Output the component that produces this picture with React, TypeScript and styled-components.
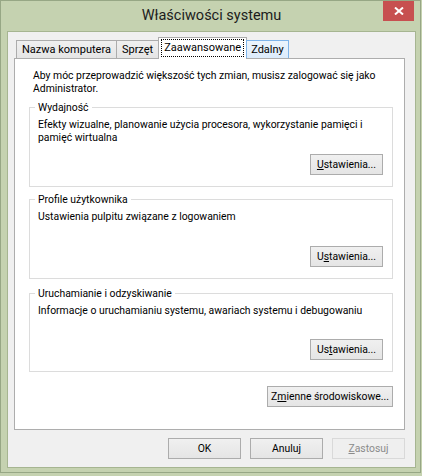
import * as React from 'react';
import styled, { createGlobalStyle } from 'styled-components';

const GlobalStyle = createGlobalStyle`
  html, body {
    margin: 0;
    padding: 0;
  }
  body {
    width: 422px;
    height: 476px;
    overflow: hidden;
    background: #c5d2b0;
    font-family: Roboto, 'Liberation Sans', Arial, sans-serif;
    font-size: 10.4px;
    color: #000;
  }
`;

const Window = styled.div`
  box-sizing: border-box;
  width: 421px;
  height: 473px;
  border: 1px solid #97a785;
  background: #c5d2b0;
  display: flex;
  flex-direction: column;
  padding: 0 4px 4px 6px;
`;

const TitleBar = styled.div`
  height: 30px;
  display: grid;
  grid-template-columns: 1fr auto 1fr;
  align-items: start;
`;

const Title = styled.div`
  grid-column: 2;
  font-size: 14.5px;
  line-height: 29px;
  color: #1c1c1c;
  white-space: nowrap;
`;

const CloseButton = styled.div`
  grid-column: 3;
  justify-self: end;
  margin-right: 2px;
  width: 31px;
  height: 20px;
  background: #c75050;
  display: flex;
  align-items: center;
  justify-content: center;
`;

const Client = styled.div`
  flex: 1;
  display: flex;
  flex-direction: column;
  background: #f0f0f0;
  border: 1px solid #a6b591;
  padding: 5px 10px 0 6px;
`;

const TabRow = styled.div`
  display: flex;
  align-items: flex-end;
  padding-left: 2px;
  margin-bottom: -1px;
  position: relative;
  z-index: 1;
`;

const Tab = styled.div<{ $active?: boolean; $hover?: boolean }>`
  box-sizing: border-box;
  height: ${(p) => (p.$active ? '22px' : '18px')};
  margin-bottom: ${(p) => (p.$active ? '0' : '1px')};
  padding: 0 ${(p) => (p.$active ? '3px' : p.$hover ? '4px' : '5px')};
  display: flex;
  align-items: center;
  font-size: 11px;
  border: 1px solid ${(p) => (p.$hover ? '#7eb4ea' : '#acacac')};
  border-bottom: none;
  margin-left: -1px;
  background: ${(p) =>
    p.$active
      ? '#fff'
      : p.$hover
        ? 'linear-gradient(#ecf4fc, #dcecfc)'
        : 'linear-gradient(#f0f0f0, #e5e5e5)'};
  white-space: nowrap;

  &:first-child {
    margin-left: 0;
  }
`;

const FocusLabel = styled.span`
  outline: 1px dotted #000;
  outline-offset: 0;
  padding: 1px 2px 2px;
  margin-top: -2px;
`;

const Panel = styled.div`
  box-sizing: border-box;
  height: 372px;
  background: #fff;
  border: 1px solid #adadad;
  padding: 10px 11px 0 14px;
  display: flex;
  flex-direction: column;
`;

const Intro = styled.p`
  margin: 0 0 0 4px;
  line-height: 13px;
`;

const Group = styled.fieldset<{ $top: number }>`
  box-sizing: border-box;
  margin: ${(p) => p.$top}px 0 0;
  border: 1px solid #dcdcdc;
  padding: 4px 9px 11px 8px;
  min-inline-size: 0;
`;

const Legend = styled.legend`
  padding: 0 3px;
  margin-left: -3px;
  line-height: 13px;
`;

const GroupBody = styled.div<{ $height: number }>`
  height: ${(p) => p.$height}px;
  display: flex;
  flex-direction: column;
  justify-content: space-between;
`;

const GroupText = styled.p`
  margin: 0;
  line-height: 13px;
`;

const Button = styled.button<{ $width?: number }>`
  box-sizing: border-box;
  width: ${(p) => p.$width ?? 73}px;
  height: 21px;
  padding: 0;
  border: 1px solid #acacac;
  background: linear-gradient(#f0f0f0, #e5e5e5);
  font-family: inherit;
  font-size: 10.4px;
  color: #000;
  white-space: nowrap;

  &:disabled {
    border-color: #d9d9d9;
    background: #efefef;
    color: #8b8b8b;
  }
`;

const GroupButton = styled(Button)`
  align-self: flex-end;
`;

const EnvButton = styled(Button)`
  margin-top: 14px;
  align-self: flex-end;
`;

const Footer = styled.div`
  display: flex;
  justify-content: flex-end;
  gap: 9px;
  margin-top: 8px;
`;

const groups = [
  {
    title: 'Wydajność',
    text: 'Efekty wizualne, planowanie użycia procesora, wykorzystanie pamięci i pamięć wirtualna',
    key: 0,
    top: 6,
    body: 57,
  },
  {
    title: 'Profile użytkownika',
    text: 'Ustawienia pulpitu związane z logowaniem',
    key: 1,
    top: 6,
    body: 57,
  },
  {
    title: 'Uruchamianie i odzyskiwanie',
    text: 'Informacje o uruchamianiu systemu, awariach systemu i debugowaniu',
    key: 2,
    top: 8,
    body: 56,
  },
];

// Access key underline sits on a different letter for each button
const settingsLabel = (k: number) => {
  const word = 'Ustawienia...';
  return (
    <>
      {word.slice(0, k)}
      <u>{word[k]}</u>
      {word.slice(k + 1)}
    </>
  );
};

export default function App() {
  return (
    <>
      <GlobalStyle />
      <Window>
        <TitleBar>
          <Title>Właściwości systemu</Title>
          <CloseButton>
            <svg width="10" height="8" viewBox="0 0 10 8">
              <path d="M1 0.5 L9 7.5 M9 0.5 L1 7.5" stroke="#fff" strokeWidth="2" />
            </svg>
          </CloseButton>
        </TitleBar>
        <Client>
          <TabRow>
            <Tab>Nazwa komputera</Tab>
            <Tab>Sprzęt</Tab>
            <Tab $active>
              <FocusLabel>Zaawansowane</FocusLabel>
            </Tab>
            <Tab $hover>Zdalny</Tab>
          </TabRow>
          <Panel>
            <Intro>
              Aby móc przeprowadzić większość tych zmian, musisz zalogować się jako
              Administrator.
            </Intro>
            {groups.map((g) => (
              <Group key={g.key} $top={g.top}>
                <Legend>{g.title}</Legend>
                <GroupBody $height={g.body}>
                  <GroupText>{g.text}</GroupText>
                  <GroupButton>{settingsLabel(g.key)}</GroupButton>
                </GroupBody>
              </Group>
            ))}
            <EnvButton $width={126}>
              Z<u>m</u>ienne środowiskowe...
            </EnvButton>
          </Panel>
          <Footer>
            <Button>OK</Button>
            <Button>Anuluj</Button>
            <Button disabled>
              <u>Z</u>astosuj
            </Button>
          </Footer>
        </Client>
      </Window>
    </>
  );
}
